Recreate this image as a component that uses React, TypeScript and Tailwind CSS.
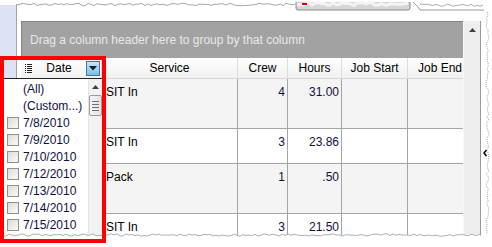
import React from 'react';

type Row = { service: string; crew: string; hours: string; h: number; bg: string };

const rows: Row[] = [
  { service: 'SIT In', crew: '4', hours: '31.00', h: 50, bg: 'bg-[#f4f4f4]' },
  { service: 'SIT In', crew: '3', hours: '23.86', h: 35, bg: 'bg-white' },
  { service: 'Pack', crew: '1', hours: '.50', h: 50, bg: 'bg-[#f4f4f4]' },
  { service: 'SIT In', crew: '3', hours: '21.50', h: 35, bg: 'bg-white' },
];

const dates = ['7/8/2010', '7/9/2010', '7/10/2010', '7/12/2010', '7/13/2010', '7/14/2010', '7/15/2010', '7/16/2010'];

// torn-paper edge, deterministic jitter
function wave(x0: number, x1: number, y: number, amp: number, seed: number, vertical = false) {
  const pts: string[] = [];
  let s = seed;
  for (let t = x0; t <= x1; t += 3) {
    s = (s * 9301 + 49297) % 233280;
    const o = (s / 233280 - 0.5) * amp * 2;
    pts.push(vertical ? `${y + o},${t}` : `${t},${y + o}`);
  }
  return pts.join(' ');
}

function Checkbox() {
  return (
    <div className="w-[12px] h-[12px] border border-[#8f8f8f] bg-gradient-to-br from-[#dcdcdc] to-[#fafafa] shrink-0" />
  );
}

function DateFilterList() {
  return (
    <div className="absolute left-[3px] top-[78px] w-[99px] h-[165px] bg-white border-t border-[#222] flex">
      <div className="flex-1 flex flex-col pt-[1px]">
        <div className="h-[17px] flex items-center pl-[20px] text-[#101040]">(All)</div>
        <div className="h-[17px] flex items-center pl-[20px] text-[#101040]">(Custom...)</div>
        {dates.map(d => (
          <div key={d} className="h-[17px] flex items-center gap-[4px] pl-[4px] text-[#101040]">
            <Checkbox />
            <span>{d}</span>
          </div>
        ))}
      </div>
      <div className="w-[14px] bg-[#f2f2f2] border-l border-[#e4e4e4] flex flex-col items-center pt-[6px]">
        <svg width="7" height="4" viewBox="0 0 7 4"><path d="M3.5 0 L7 4 L0 4 Z" fill="#404040" /></svg>
        <div className="mt-[6px] w-[13px] h-[21px] border border-[#9a9a9a] rounded-[2px] bg-gradient-to-r from-[#f6f6f6] to-[#e2e2e2] flex flex-col items-center justify-center gap-[2px]">
          <div className="w-[7px] h-px bg-[#707070]" />
          <div className="w-[7px] h-px bg-[#707070]" />
          <div className="w-[7px] h-px bg-[#707070]" />
          <div className="w-[7px] h-px bg-[#707070]" />
        </div>
      </div>
    </div>
  );
}

export default function App() {
  return (
    <div className="relative w-[492px] h-[247px] overflow-hidden bg-white text-[12px] text-black font-['Liberation_Sans',Arial,sans-serif]">
      <div className="flex h-full pt-[5px]">
        <div className="w-[17px] shrink-0 bg-[#dde3f3] border-r border-[#9ea3ad]" />
        <div className="w-[4px] shrink-0" />
        <div className="w-[442px] shrink-0 flex flex-col pt-[16px] overflow-hidden">
          <div className="h-[37px] shrink-0 bg-[#a2a2a2] border-t border-l border-[#858585] flex items-center pl-[8px] text-[#e8e8e8]">
            Drag a column header here to group by that column
          </div>
          <div className="h-[21px] shrink-0 grid grid-cols-[81px_136px_50px_54px_66px_64px] bg-gradient-to-b from-white to-[#f1f1f1] border-b border-[#d6d6d6]">
            <div className="flex items-center pl-[4px] pr-[1px] border-r border-[#dcdcdc]">
              <svg width="7" height="9" viewBox="0 0 7 9">
                <rect x="0" y="0" width="1" height="1" fill="#222" />
                <rect x="2" y="0" width="5" height="1" fill="#222" />
                <rect x="0" y="2" width="1" height="1" fill="#222" />
                <rect x="2" y="2" width="5" height="1" fill="#222" />
                <rect x="0" y="4" width="1" height="1" fill="#222" />
                <rect x="2" y="4" width="5" height="1" fill="#222" />
                <rect x="0" y="6" width="1" height="1" fill="#222" />
                <rect x="2" y="6" width="5" height="1" fill="#222" />
                <rect x="0" y="8" width="1" height="1" fill="#222" />
                <rect x="2" y="8" width="5" height="1" fill="#222" />
              </svg>
              <span className="flex-1 text-center">Date</span>
              <div className="w-[14px] h-[15px] border border-[#3b79ad] bg-gradient-to-b from-[#c9e6fa] to-[#7fbde6] flex items-center justify-center">
                <svg width="8" height="5" viewBox="0 0 8 5"><path d="M0 0 L8 0 L4 4.5 Z" fill="#0d1d2b" /></svg>
              </div>
            </div>
            <div className="flex items-center justify-center border-r border-[#dcdcdc]">Service</div>
            <div className="flex items-center justify-center border-r border-[#dcdcdc]">Crew</div>
            <div className="flex items-center justify-center border-r border-[#dcdcdc]">Hours</div>
            <div className="flex items-center justify-center border-r border-[#dcdcdc]">Job Start</div>
            <div className="flex items-center justify-center">Job End</div>
          </div>
          {rows.map((r, i) => (
            <div key={i} className={`shrink-0 grid grid-cols-[81px_136px_50px_54px_66px_64px] ${r.bg}`} style={{ height: r.h }}>
              <div className="border-r border-b border-[#a4a4a4]" />
              <div className="border-r border-b border-[#a4a4a4] pl-[4px] pt-[4px]">{r.service}</div>
              <div className="border-r border-b border-[#a4a4a4] pr-[2px] pt-[4px] text-right text-[#101040]">{r.crew}</div>
              <div className="border-r border-b border-[#a4a4a4] pr-[2px] pt-[4px] text-right text-[#101040]">{r.hours}</div>
              <div className="border-r border-b border-[#a4a4a4]" />
              <div className="border-b border-[#a4a4a4]" />
            </div>
          ))}
        </div>
        <div className="w-[18px] shrink-0 mt-[16px] mb-[10px] bg-[#eeeeee] border-l border-[#f8f8f8] border-r border-r-[#9a9a9a] flex justify-center pt-[7px]">
          <svg width="7" height="4" viewBox="0 0 7 4"><path d="M3.5 0 L7 4 L0 4 Z" fill="#404040" /></svg>
        </div>
        <div className="flex-1 relative" />
      </div>

      <DateFilterList />

      {/* torn edges */}
      <svg className="absolute left-0 top-0" width="492" height="247" viewBox="0 0 492 247">
        <polygon points={`0,0 492,0 492,3 ${wave(16, 296, 4, 1.3, 7).split(' ').reverse().join(' ')} 16,3 0,3`} fill="#ffffff" />
        <polyline points={wave(16, 296, 4.5, 1.3, 7)} fill="none" stroke="#a8a8a8" strokeWidth="1" />
        <path d="M296 2 L296 8 Q296 10 298 10 L408 10 Q410 10 410 8 L410 2" fill="#d6d6d6" stroke="#8a8a8a" strokeWidth="1" />
        <polyline points={wave(297, 409, 4, 1.5, 13)} fill="none" stroke="#f4f4f4" strokeWidth="3" />
        <rect x="302" y="3" width="5" height="2" fill="#e00000" />
        <path d="M413 2 L418 7 L420 10 L484 10" fill="none" stroke="#9a9a9a" strokeWidth="1" />
        <polyline points={wave(420, 484, 5, 1.3, 21)} fill="none" stroke="#b0b0b0" strokeWidth="1" />
        <polygon points={`492,0 ${wave(0, 247, 488, 1.5, 31, true)} 492,247`} fill="#ffffff" />
        <polyline points={wave(12, 236, 487.5, 1.5, 31, true)} fill="none" stroke="#a8a8a8" strokeWidth="1" strokeDasharray="1 1" />
        <polygon points={`0,247 ${wave(0, 492, 235, 1.3, 41)} 492,247`} fill="#ffffff" />
        <polyline points={wave(3, 482, 235, 1.3, 41)} fill="none" stroke="#b0b0b0" strokeWidth="1" />
        <path d="M486.5 150 L484 153 L486.5 156" fill="none" stroke="#000" strokeWidth="1.5" />
      </svg>

      {/* annotation */}
      <div className="absolute left-0 top-[56px] w-[106px] h-[187px] border-4 border-[#ff0000]" />
    </div>
  );
}
